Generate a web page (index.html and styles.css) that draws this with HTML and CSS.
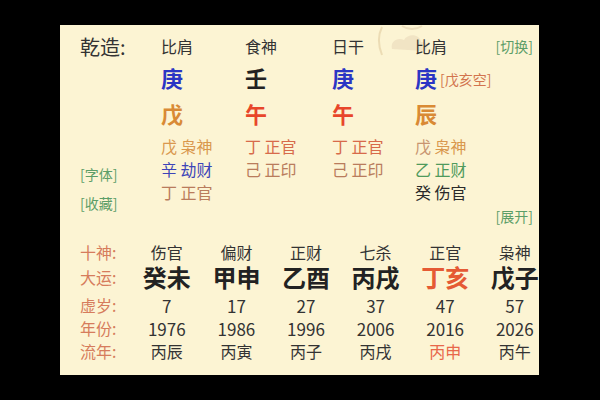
FILE: index.html
```html
<!DOCTYPE html>
<html lang="zh">
<head>
<meta charset="utf-8">
<link rel="stylesheet" href="styles.css">
</head>
<body>
<div class="panel">
  <svg class="deco" width="70" height="34" viewBox="0 0 70 34">
    <path d="M14 2 C10 10 10 20 14 30" fill="none" stroke="#ecdcb4" stroke-width="2"/>
    <path d="M24 24 C22 16 30 12 36 15 C40 8 52 9 53 17 C60 16 62 24 56 26 Z" fill="#f1e4c4"/>
    <path d="M34 1 C40 5 48 5 54 1" fill="none" stroke="#eddfbc" stroke-width="2"/>
  </svg>
  <div class="top">
    <div class="side">
      <div class="title">乾造:</div>
      <div class="link l1">[字体]</div>
      <div class="link l2">[收藏]</div>
    </div>
    <div class="pillars">
      <div class="hd">比肩</div>
      <div class="hd">食神</div>
      <div class="hd">日干</div>
      <div class="hd last"><span>比肩</span><span class="link">[切换]</span></div>

      <div class="st blue">庚</div>
      <div class="st dark">壬</div>
      <div class="st blue">庚</div>
      <div class="st blue">庚<span class="kong">[戊亥空]</span></div>

      <div class="br orange">戊</div>
      <div class="br red">午</div>
      <div class="br red">午</div>
      <div class="br orange">辰</div>

      <div class="hid first c-or">戊 枭神</div>
      <div class="hid first c-rd">丁 正官</div>
      <div class="hid first c-rd">丁 正官</div>
      <div class="hid first"><span class="c-or2">戊</span> <span class="c-or">枭神</span></div>

      <div class="hid c-bl">辛 劫财</div>
      <div class="hid c-br">己 正印</div>
      <div class="hid c-br">己 正印</div>
      <div class="hid c-gr">乙 正财</div>

      <div class="hid c-br">丁 正官</div>
      <div class="hid"></div>
      <div class="hid"></div>
      <div class="hid c-dk">癸 伤官</div>

      <div class="more link">[展开]</div>
    </div>
  </div>
  <div class="luck">
    <div class="lb r1">十神:</div>
    <div class="r1">伤官</div><div class="r1">偏财</div><div class="r1">正财</div><div class="r1">七杀</div><div class="r1">正官</div><div class="r1">枭神</div>

    <div class="lb r2">大运:</div>
    <div class="r2 big">癸未</div><div class="r2 big">甲申</div><div class="r2 big">乙酉</div><div class="r2 big">丙戌</div><div class="r2 big hl">丁亥</div><div class="r2 big">戊子</div>

    <div class="lb r3">虚岁:</div>
    <div class="r3 num">7</div><div class="r3 num">17</div><div class="r3 num">27</div><div class="r3 num">37</div><div class="r3 num">47</div><div class="r3 num">57</div>

    <div class="lb r4">年份:</div>
    <div class="r4 num">1976</div><div class="r4 num">1986</div><div class="r4 num">1996</div><div class="r4 num">2006</div><div class="r4 num">2016</div><div class="r4 num">2026</div>

    <div class="lb r5">流年:</div>
    <div class="r5">丙辰</div><div class="r5">丙寅</div><div class="r5">丙子</div><div class="r5">丙戌</div><div class="r5 hl2">丙申</div><div class="r5">丙午</div>
  </div>
</div>
</body>
</html>
```

FILE: styles.css
```css
html, body {
  margin: 0;
  padding: 0;
  background: #000;
}
body {
  width: 600px;
  height: 400px;
  overflow: hidden;
  font-family: "Noto Sans CJK SC", "Noto Sans", sans-serif;
  color: #333;
}
.panel {
  position: relative;
  box-sizing: border-box;
  width: 479px;
  height: 350px;
  margin: 25px 0 0 60px;
  padding: 0 6px 0 20px;
  background: #fcf4d3;
}
.deco {
  position: absolute;
  left: 308px;
  top: 0;
}
.top {
  position: relative;
  display: flex;
  padding-top: 10px;
}
.side {
  width: 81px;
  flex: none;
  display: flex;
  flex-direction: column;
  align-items: flex-start;
}
.title {
  font-size: 20px;
  line-height: 24px;
  color: #333;
}
.link {
  color: #5c9e68;
  font-size: 14px;
  line-height: 18px;
}
.side .l1 { margin-top: 106px; }
.side .l2 { margin-top: 11px; }
.pillars {
  flex: 1;
  display: grid;
  grid-template-columns: 84px 87px 83px 1fr;
}
.hd {
  font-size: 16px;
  line-height: 22px;
  color: #333;
}
.hd.last {
  display: flex;
  justify-content: space-between;
  align-items: center;
}
.st {
  font-size: 22px;
  line-height: 41px;
  font-weight: 700;
}
.br {
  font-size: 22px;
  line-height: 27px;
  font-weight: 700;
}
.blue { color: #2b35c4; }
.dark { color: #222; }
.orange { color: #d98a35; }
.red { color: #e8462a; }
.kong {
  font-size: 14px;
  font-weight: 400;
  color: #d2744e;
  margin-left: 3px;
  vertical-align: 2px;
}
.hid {
  font-size: 16px;
  line-height: 23px;
  white-space: pre;
}
.hid.first { padding-top: 7.5px; }
.c-or { color: #d9984e; }
.c-or2 { color: #c89470; }
.c-rd { color: #d76a4a; }
.c-br { color: #b97c5c; }
.c-bl { color: #3d44b8; }
.c-gr { color: #4f9a5c; }
.c-dk { color: #2a2a2a; }
.more {
  grid-column: 4;
  justify-self: end;
  line-height: 24px;
}
.luck {
  display: grid;
  grid-template-columns: 52px repeat(6, 69.6px);
  grid-template-rows: 18px 33px 23px 23px 23px;
  margin-top: 15px;
  font-size: 16px;
  color: #333;
  text-align: center;
  align-items: center;
}
.luck > div {
  line-height: 1;
  white-space: nowrap;
}
.luck .lb {
  text-align: left;
  color: #d67c5c;
  font-size: 16px;
}
.luck .big {
  font-size: 24px;
  font-weight: 700;
  color: #222;
}
.luck .num {
  font-size: 17px;
}
.luck .hl { color: #e55a34; }
.luck .hl2 { color: #e8674a; }
```
